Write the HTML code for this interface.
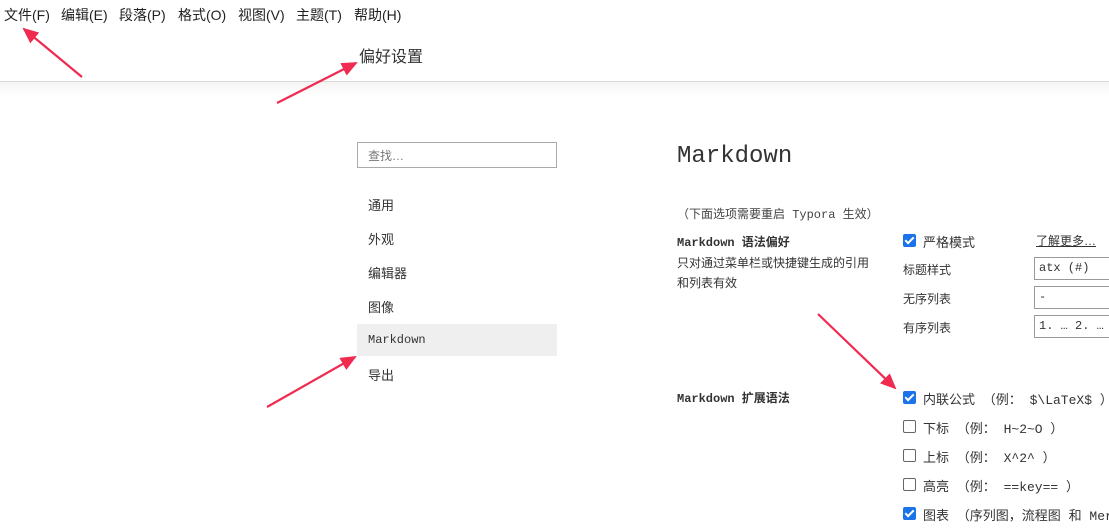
<!DOCTYPE html>
<html><head><meta charset="utf-8"><style>
*{margin:0;padding:0;box-sizing:border-box}
body{width:1109px;height:532px;overflow:hidden;background:#fff;font-family:"Liberation Sans","Noto Sans CJK SC",sans-serif;color:#333;position:relative}
.a{position:absolute;white-space:nowrap}
.menu{top:5px;font-size:14px;color:#222}
.mono{font-family:"Liberation Mono","Noto Sans CJK SC",monospace}
.hdr{position:absolute;left:0;top:0;width:1109px;height:82px;border-bottom:1px solid #d8d8d8;background:#fff}
.shade{position:absolute;left:0;top:82px;width:1109px;height:14px;background:linear-gradient(#f4f4f4,#fff)}
.nav{left:368px;font-size:13px;color:#333}
.cb{position:absolute;width:13px;height:13px;border-radius:2px}
.on{background:#1a73e8}
.off{border:1px solid #666;background:#fff}
.on:after{content:"";position:absolute;left:4px;top:1px;width:3px;height:7px;border:solid #fff;border-width:0 2px 2px 0;transform:rotate(45deg)}
.box{position:absolute;left:1034px;width:80px;height:23px;border:1px solid #999;font-size:12px;padding:3px 4px}
.t{font-size:13px;color:#333}
</style></head><body>
<div class="hdr"></div><div class="shade"></div>
<div class="a menu" style="left:4px">文件(F)</div>
<div class="a menu" style="left:61px">编辑(E)</div>
<div class="a menu" style="left:119px">段落(P)</div>
<div class="a menu" style="left:178px">格式(O)</div>
<div class="a menu" style="left:238px">视图(V)</div>
<div class="a menu" style="left:296px">主题(T)</div>
<div class="a menu" style="left:354px">帮助(H)</div>
<div class="a" style="left:359px;top:43px;font-size:16px;color:#333">偏好设置</div>

<div class="a" style="left:357px;top:142px;width:200px;height:26px;border:1px solid #aaa;"></div>
<div class="a" style="left:368px;top:147px;font-size:12px;color:#777">查找…</div>
<div class="a nav" style="top:195px">通用</div>
<div class="a nav" style="top:229px">外观</div>
<div class="a nav" style="top:263px">编辑器</div>
<div class="a nav" style="top:297px">图像</div>
<div class="a" style="left:357px;top:324px;width:200px;height:32px;background:#efefef;border-radius:2px"></div>
<div class="a nav mono" style="top:333px;font-size:12px">Markdown</div>
<div class="a nav" style="top:365px">导出</div>

<div class="a mono" style="left:677px;top:143px;font-size:24px;color:#333">Markdown</div>
<div class="a mono" style="left:677px;top:205px;font-size:12px;color:#444">（下面选项需要重启 Typora 生效）</div>
<div class="a mono" style="left:677px;top:233px;font-size:12px;font-weight:bold;color:#333">Markdown 语法偏好</div>
<div class="a t" style="left:677px;top:254px;font-size:12px">只对通过菜单栏或快捷键生成的引用</div>
<div class="a t" style="left:677px;top:274px;font-size:12px">和列表有效</div>

<div class="cb on" style="left:903px;top:234px"></div>
<div class="a t" style="left:923px;top:232px">严格模式</div>
<div class="a t" style="left:1036px;top:232px;text-decoration:underline;font-size:12px">了解更多…</div>
<div class="a t" style="left:903px;top:261px;font-size:12px">标题样式</div>
<div class="box mono" style="top:257px">atx (#)</div>
<div class="a t" style="left:903px;top:290px;font-size:12px">无序列表</div>
<div class="box mono" style="top:286px">-</div>
<div class="a t" style="left:903px;top:319px;font-size:12px">有序列表</div>
<div class="box mono" style="top:315px">1. … 2. …</div>

<div class="a mono" style="left:677px;top:389px;font-size:12px;font-weight:bold;color:#333">Markdown 扩展语法</div>
<div class="cb on" style="left:903px;top:391px"></div>
<div class="a t mono" style="left:923px;top:389px">内联公式 （例： $\LaTeX$ ）</div>
<div class="cb off" style="left:903px;top:420px"></div>
<div class="a t mono" style="left:923px;top:418px">下标 （例： H~2~O ）</div>
<div class="cb off" style="left:903px;top:449px"></div>
<div class="a t mono" style="left:923px;top:447px">上标 （例： X^2^ ）</div>
<div class="cb off" style="left:903px;top:478px"></div>
<div class="a t mono" style="left:923px;top:476px">高亮 （例： ==key== ）</div>
<div class="cb on" style="left:903px;top:507px"></div>
<div class="a t mono" style="left:923px;top:505px">图表 （序列图，流程图 和 Mermaid）</div>

<svg class="a" style="left:0;top:0" width="1109" height="532">
<defs><marker id="m" markerUnits="userSpaceOnUse" markerWidth="16" markerHeight="14" refX="14" refY="7" orient="auto"><path d="M0,0 L16,7 L0,14 z" fill="#f02a50"/></marker></defs>
<g stroke="#f02a50" stroke-width="2.2" fill="none" marker-end="url(#m)">
<line x1="82" y1="77" x2="24" y2="29"/>
<line x1="277" y1="103" x2="356" y2="63"/>
<line x1="267" y1="407" x2="355" y2="357"/>
<line x1="818" y1="314" x2="895" y2="388"/>
</g></svg>
</body></html>
